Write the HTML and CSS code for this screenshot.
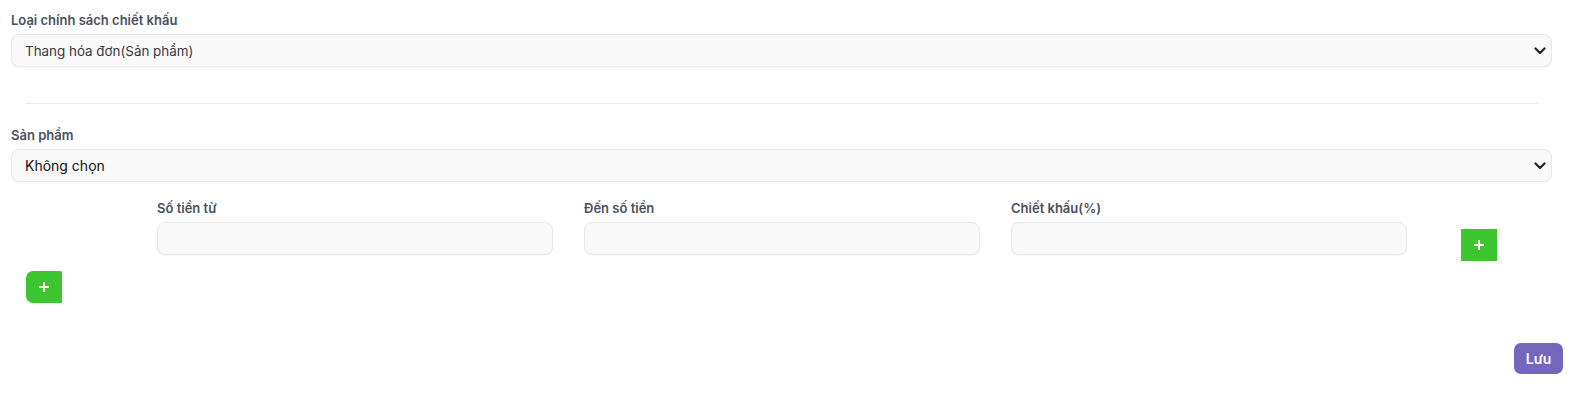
FILE: index.html
```html
<!DOCTYPE html>
<html lang="vi">
<head>
  <meta charset="UTF-8" />
  <title>Chính sách chiết khấu</title>
  <link rel="stylesheet" href="styles.css">
</head>
<body>
  <div class="page">
    <div class="field">
      <label class="field-label">Loại chính sách chiết khấu</label>
      <div class="select-wrap">
        <select class="form-select light">
          <option>Thang hóa đơn(Sản phẩm)</option>
        </select>
        <svg class="chevron" width="12" height="8" viewBox="0 0 12 8"><path d="M1.5 1.5 6 6l4.5-4.5" fill="none" stroke="#23222e" stroke-width="2.2" stroke-linecap="round" stroke-linejoin="round"/></svg>
      </div>
    </div>

    <hr class="divider">

    <div class="field">
      <label class="field-label">Sản phẩm</label>
      <div class="select-wrap">
        <select class="form-select dark">
          <option>Không chọn</option>
        </select>
        <svg class="chevron" width="12" height="8" viewBox="0 0 12 8"><path d="M1.5 1.5 6 6l4.5-4.5" fill="none" stroke="#23222e" stroke-width="2.2" stroke-linecap="round" stroke-linejoin="round"/></svg>
      </div>
    </div>

    <div class="tier-row">
      <div class="tier-col">
        <label class="field-label">Số tiền từ</label>
        <input type="text" class="form-input">
      </div>
      <div class="tier-col">
        <label class="field-label">Đến số tiền</label>
        <input type="text" class="form-input">
      </div>
      <div class="tier-col">
        <label class="field-label">Chiết khấu(%)</label>
        <input type="text" class="form-input">
      </div>
      <button class="btn-add btn-add-tier">
        <svg width="12" height="12" viewBox="0 0 12 12"><path d="M6 1v10M1 6h10" stroke="#fff" stroke-width="2"/></svg>
      </button>
    </div>

    <button class="btn-add btn-add-product">
      <svg width="12" height="12" viewBox="0 0 12 12"><path d="M6 1v10M1 6h10" stroke="#fff" stroke-width="2"/></svg>
    </button>

    <div class="actions">
      <button class="btn-save">Lưu</button>
    </div>
  </div>
</body>
</html>
```

FILE: styles.css
```css
body {
  margin: 0;
  font-family: 'Inter', 'Noto Sans', sans-serif;
  background: #fff;
  color: #333;
}

.page {
  padding: 10px 20px 0 11px;
}

.field {
  margin-right: 11px;
}

.field-label {
  display: block;
  font-size: 13px;
  line-height: 20px;
  font-weight: 600;
  color: #4b505e;
  margin-bottom: 4px;
}

.select-wrap {
  position: relative;
}

.form-select {
  appearance: none;
  -webkit-appearance: none;
  display: block;
  width: 100%;
  height: 33px;
  box-sizing: border-box;
  padding: 0 36px 0 13px;
  border: 1px solid #e7e8ec;
  border-radius: 8px;
  background: #f9f9fa;
  box-shadow: 0 1px 2px rgba(20, 20, 40, 0.04);
  font-family: inherit;
  font-size: 14px;
  color: #34313f;
  outline: none;
}

.form-select.light {
  font-size: 13.4px;
  color: #3a3744;
}

.form-select.dark {
  color: #111;
}

.chevron {
  position: absolute;
  right: 6px;
  top: 13px;
  pointer-events: none;
}

.divider {
  border: none;
  border-top: 1px solid #ebebef;
  margin: 36px 25px 21px 15px;
}

.tier-row {
  display: flex;
  align-items: flex-start;
  margin-top: 16px;
  padding-left: 146px;
}

.tier-col {
  width: 396px;
  margin-right: 31px;
}

.tier-col:nth-child(3) {
  margin-right: 54px;
}

.form-input {
  display: block;
  width: 100%;
  height: 33px;
  box-sizing: border-box;
  border: 1px solid #e7e8ec;
  border-radius: 8px;
  background: #f9f9fa;
  box-shadow: 0 1px 2px rgba(20, 20, 40, 0.04);
  outline: none;
}

.btn-add {
  display: flex;
  align-items: center;
  justify-content: center;
  width: 36px;
  height: 32px;
  padding: 0;
  border: none;
  background: #3cc52f;
  cursor: pointer;
}

.btn-add-tier {
  margin-top: 31px;
}

.btn-add-product {
  margin: 10px 0 0 15px;
  border-radius: 7px 2px 0 7px;
}

.actions {
  display: flex;
  justify-content: flex-end;
  margin-top: 40px;
}

.btn-save {
  width: 49px;
  height: 31px;
  border: none;
  border-radius: 7px;
  background: #7366bb;
  color: #fff;
  font-family: 'Inter', sans-serif;
  font-size: 14px;
  font-weight: 600;
  cursor: pointer;
}
```
